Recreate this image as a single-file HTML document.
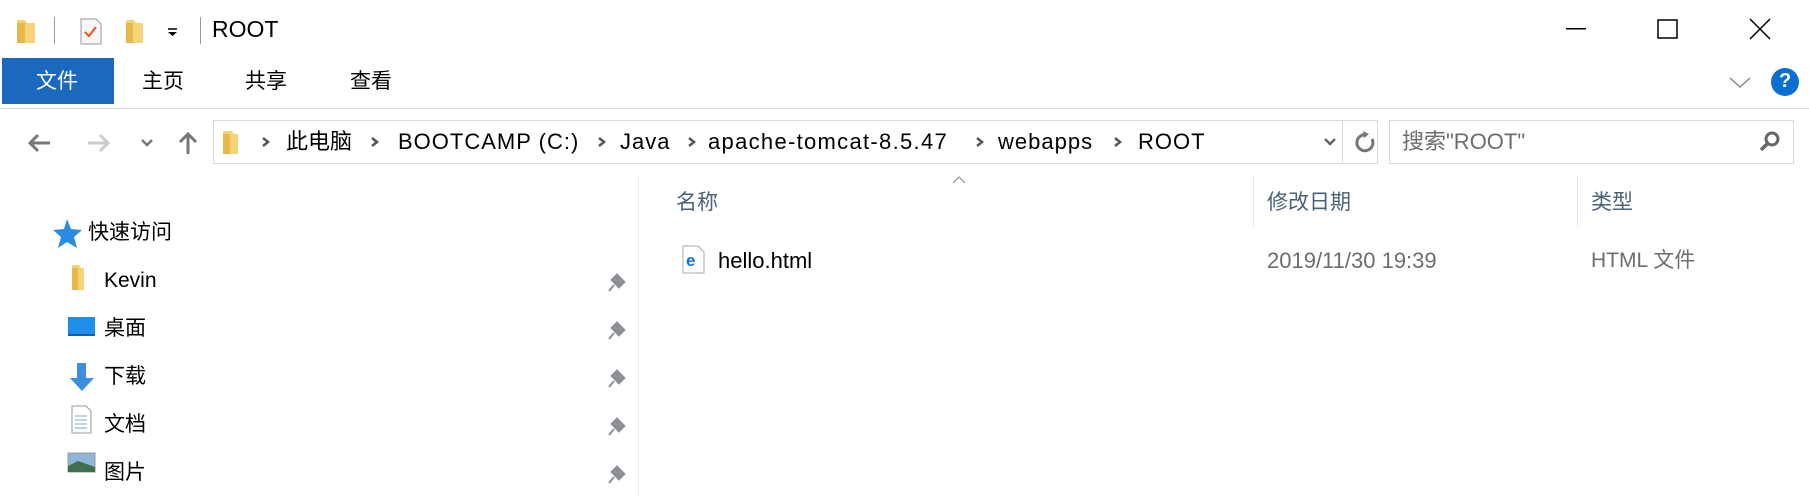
<!DOCTYPE html>
<html><head><meta charset="utf-8"><style>
*{margin:0;padding:0;box-sizing:border-box}
body{width:1809px;height:496px;background:#fff;position:relative;overflow:hidden;font-family:"Liberation Sans","Noto Sans CJK SC",sans-serif;color:#000}
.a{position:absolute;white-space:nowrap;line-height:1}
.t{font-size:21px}
.g{color:#4c607a}
.w{font-size:22px;letter-spacing:1px}
</style></head><body>
<!-- title bar -->
<svg class="a" style="left:0;top:0" width="1809" height="56">
 <path d="M17 20h8l2 3h8v20H17z" fill="#f4d37a"/><path d="M17 23h8v20h-8z" fill="#e7b84a"/>
 <rect x="54" y="17" width="1" height="27" fill="#999"/>
 <path d="M81 19h15l5 5v20H81z" fill="#f7f7f7" stroke="#999"/><path d="M85 32l4 4 7-9" stroke="#e8541a" stroke-width="2" fill="none"/>
 <path d="M126 20h8l2 3h7v20h-17z" fill="#f4d37a"/><path d="M126 23h7v20h-7z" fill="#e7b84a"/>
 <path d="M168 29h9" stroke="#000" stroke-width="1.5"/><path d="M168 32h9l-4.5 4z" fill="#000"/>
 <rect x="200" y="17" width="1" height="27" fill="#999"/>
 <rect x="1566" y="28" width="20" height="1.5" fill="#000"/>
 <rect x="1658" y="20" width="19" height="18" fill="none" stroke="#000" stroke-width="1.5"/>
 <path d="M1750 19l20 20M1770 19l-20 20" stroke="#000" stroke-width="1.5"/>
</svg>
<div class="a" style="left:212px;top:18px;font-size:23px">ROOT</div>
<!-- tabs -->
<div class="a" style="left:2px;top:58px;width:112px;height:46px;background:#1a69bf"></div>
<div class="a t" style="left:36px;top:71px;color:#fff">文件</div>
<div class="a t" style="left:142px;top:71px">主页</div>
<div class="a t" style="left:245px;top:71px">共享</div>
<div class="a t" style="left:350px;top:71px">查看</div>
<svg class="a" style="left:1720px;top:60px" width="89" height="48">
 <path d="M10 18l10 9 10-9" stroke="#888" stroke-width="1.5" fill="none"/>
 <circle cx="65" cy="22" r="14" fill="#0b6fd1"/>
</svg>
<div class="a" style="left:1779px;top:71px;color:#fff;font-size:20px;font-weight:bold">?</div>
<div class="a" style="left:0;top:108px;width:1809px;height:1px;background:#dcdcdc"></div>
<!-- nav -->
<svg class="a" style="left:0;top:120px" width="215" height="45">
 <path d="M30 23h20M38 15l-8 8 8 8" stroke="#777" stroke-width="3" fill="none"/>
 <path d="M88 23h20M100 15l8 8-8 8" stroke="#ccc" stroke-width="3" fill="none"/>
 <path d="M142 20l5 5 5-5" stroke="#777" stroke-width="2.5" fill="none"/>
 <path d="M188 34V14M180 22l8-8 8 8" stroke="#777" stroke-width="3" fill="none"/>
</svg>
<div class="a" style="left:213px;top:120px;width:1165px;height:44px;border:1px solid #d9d9d9"></div>
<div class="a" style="left:1342px;top:120px;width:1px;height:44px;background:#d9d9d9"></div>
<svg class="a" style="left:213px;top:120px" width="1165" height="44">
 <path d="M10 11h9l2 3h4v20H10z" fill="#f4d37a"/><path d="M10 14h7v20h-7z" fill="#e7b84a"/>
 <g stroke="#555" stroke-width="2.5" fill="none">
 <path d="M50 18l5 4-5 4M159 18l5 4-5 4M386 18l5 4-5 4M476 18l5 4-5 4M764 18l5 4-5 4M902 18l5 4-5 4"/></g>
 <path d="M1112 19l5 5 5-5" stroke="#666" stroke-width="2.5" fill="none"/>
 <path d="M1154 15a8 8 0 1 0 5 4" stroke="#777" stroke-width="3" fill="none"/><path d="M1150 11l6 3-5 4z" fill="#777"/>
</svg>
<div class="a t" style="left:286px;top:131px;font-size:22px">此电脑</div>
<div class="a w" style="left:398px;top:131px">BOOTCAMP (C:)</div>
<div class="a w" style="left:620px;top:131px">Java</div>
<div class="a w" style="left:708px;top:131px;letter-spacing:1.3px">apache-tomcat-8.5.47</div>
<div class="a w" style="left:998px;top:131px">webapps</div>
<div class="a w" style="left:1138px;top:131px">ROOT</div>
<div class="a" style="left:1389px;top:120px;width:405px;height:44px;border:1px solid #d9d9d9"></div>
<div class="a t" style="left:1402px;top:131px;color:#6d6d6d;font-size:22px">搜索"ROOT"</div>
<svg class="a" style="left:1755px;top:128px" width="30" height="30"><circle cx="17" cy="11" r="6" stroke="#666" stroke-width="3" fill="none"/><path d="M13 15l-7 7" stroke="#666" stroke-width="3.5"/></svg>
<!-- left pane -->
<div class="a" style="left:638px;top:176px;width:1px;height:320px;background:#eee"></div>
<svg class="a" style="left:0;top:210px" width="640" height="286">
 <path d="M67 9l4 10 11 1-8 7 3 11-10-6-9 6 3-11-8-7 11-1z" fill="#2a8be0"/>
 <path d="M72 55h7l2 3h3v22H72z" fill="#f4d37a"/><path d="M72 58h6v22h-6z" fill="#e7b84a"/>
 <rect x="68" y="107" width="27" height="18" fill="#1e8fe8"/><rect x="68" y="124" width="27" height="2" fill="#0a5fb0"/>
 <path d="M77 153h9v15h8l-12 13-12-13h7z" fill="#3b8ee0"/>
 <path d="M72 196h14l5 5v22H72z" fill="#fff" stroke="#999"/><path d="M75 206h12M75 210h12M75 214h12M75 218h12" stroke="#7aa7d6"/>
 <rect x="68" y="243" width="27" height="19" fill="#8fb6d8" stroke="#999"/><path d="M68 256l10-5 17 6v5H68z" fill="#3f6f50"/>
 <g fill="#8a9096" stroke="#8a9096">
 <path d="M611 70l6-6 8 8-6 6z"/><path d="M614 75l-5 6" stroke-width="2"/>
 <path d="M611 118l6-6 8 8-6 6z"/><path d="M614 123l-5 6" stroke-width="2"/>
 <path d="M611 166l6-6 8 8-6 6z"/><path d="M614 171l-5 6" stroke-width="2"/>
 <path d="M611 214l6-6 8 8-6 6z"/><path d="M614 219l-5 6" stroke-width="2"/>
 <path d="M611 262l6-6 8 8-6 6z"/><path d="M614 267l-5 6" stroke-width="2"/></g>
</svg>
<div class="a t" style="left:88px;top:222px">快速访问</div>
<div class="a t" style="left:104px;top:270px">Kevin</div>
<div class="a t" style="left:104px;top:318px">桌面</div>
<div class="a t" style="left:104px;top:366px">下载</div>
<div class="a t" style="left:104px;top:414px">文档</div>
<div class="a t" style="left:104px;top:462px">图片</div>
<!-- content -->
<svg class="a" style="left:950px;top:174px" width="20" height="12"><path d="M3 9l6-6 6 6" stroke="#888" fill="none"/></svg>
<div class="a" style="left:1253px;top:176px;width:1px;height:51px;background:#e5e5e5"></div>
<div class="a" style="left:1577px;top:176px;width:1px;height:51px;background:#e5e5e5"></div>
<div class="a t g" style="left:676px;top:192px">名称</div>
<div class="a t g" style="left:1267px;top:192px">修改日期</div>
<div class="a t g" style="left:1591px;top:192px">类型</div>
<svg class="a" style="left:682px;top:245px" width="26" height="30"><path d="M1 1h15l6 6v21H1z" fill="#fff" stroke="#aaa"/><text x="4" y="21" font-family="Liberation Sans" font-weight="bold" font-size="17" fill="#1173d4">e</text></svg>
<div class="a t" style="left:718px;top:250px;font-size:22px">hello.html</div>
<div class="a t" style="left:1267px;top:250px;color:#6d6d6d;font-size:22px">2019/11/30 19:39</div>
<div class="a t" style="left:1591px;top:250px;color:#6d6d6d">HTML 文件</div>
</body></html>
